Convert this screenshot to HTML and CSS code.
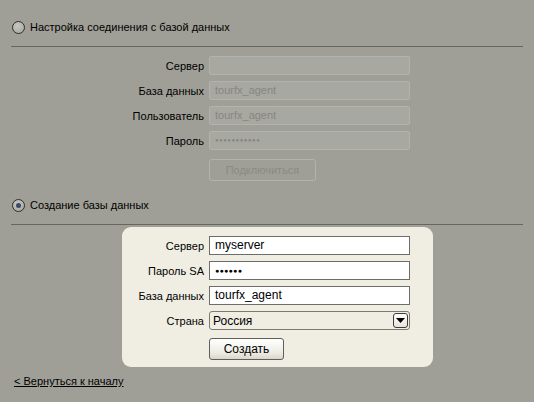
FILE: index.html
```html
<!DOCTYPE html>
<html lang="ru">
<head>
<meta charset="utf-8">
<link rel="stylesheet" href="styles.css">
</head>
<body>
<div class="page">
  <div class="radio-row first">
    <span class="radio"></span>
    <span class="radio-label">Настройка соединения с базой данных</span>
  </div>
  <div class="rule"></div>
  <div class="form disabled">
    <label class="lbl">Сервер</label>
    <div class="field"></div>
    <label class="lbl">База данных</label>
    <div class="field">tourfx_agent</div>
    <label class="lbl">Пользователь</label>
    <div class="field">tourfx_agent</div>
    <label class="lbl">Пароль</label>
    <div class="field dots">●●●●●●●●●●●</div>
    <span></span>
    <div class="btn btn-off">Подключиться</div>
  </div>

  <div class="radio-row second">
    <span class="radio checked"></span>
    <span class="radio-label">Создание базы данных</span>
  </div>
  <div class="rule"></div>

  <div class="panel">
    <div class="form active">
      <label class="lbl">Сервер</label>
      <div class="field">myserver</div>
      <label class="lbl">Пароль SA</label>
      <div class="field pw">●●●●●●</div>
      <label class="lbl">База данных</label>
      <div class="field">tourfx_agent</div>
      <label class="lbl">Страна</label>
      <div class="select">
        <span>Россия</span>
        <span class="drop"><svg width="9" height="5" viewBox="0 0 9 5"><path d="M0 0h9L4.5 5z" fill="#000"/></svg></span>
      </div>
      <span></span>
      <div class="btn btn-on">Создать</div>
    </div>
  </div>

  <a class="back" href="#">&lt; Вернуться к началу</a>
</div>
</body>
</html>
```

FILE: styles.css
```css
html, body {
  margin: 0;
  background: #9f9f97;
  font-family: "Liberation Sans", Arial, sans-serif;
  font-size: 11px;
  color: #000;
}
.page {
  padding: 0 11px;
  height: 402px;
  box-sizing: border-box;
  overflow: hidden;
}
.radio-row {
  display: flex;
  align-items: center;
  height: 14px;
  padding-left: 1px;
}
.radio-row.first { margin-top: 20px; }
.radio-row.second { margin-top: 17px; }
.radio {
  width: 11px;
  height: 11px;
  border: 1px solid #2e2e2b;
  border-radius: 50%;
  background: radial-gradient(circle at 40% 35%, #c8c8c2, #a4a49e);
  position: relative;
  flex: none;
}
.radio.checked::after {
  content: "";
  position: absolute;
  left: 3px;
  top: 3px;
  width: 5px;
  height: 5px;
  border-radius: 50%;
  background: #3c4a68;
}
.radio-label { margin-left: 5px; }
.rule {
  margin-top: 12px;
  height: 1px;
  background: #67675f;
}
.form {
  display: grid;
  grid-template-columns: 193px 201px;
  grid-template-rows: repeat(4, 19px) auto;
  column-gap: 5px;
  row-gap: 6px;
  align-items: center;
}
.form.disabled { margin-top: 9px; }
.lbl { text-align: right; }
.field {
  height: 19px;
  box-sizing: border-box;
  line-height: 17px;
  padding: 0 5px;
  white-space: nowrap;
}
.disabled .field {
  background: #a8a8a2;
  border: 1px solid #b3b3ac;
  border-radius: 2px;
  color: #86867f;
}
.disabled .dots { font-size: 6px; letter-spacing: 0.5px; line-height: 17px; }
.btn {
  box-sizing: border-box;
  height: 22px;
  line-height: 20px;
  text-align: center;
  border-radius: 3px;
  margin-top: 3px;
  align-self: start;
}
.btn-off {
  width: 107px;
  border: 1px solid #b3b3ac;
  color: #8a8a84;
}
.panel {
  margin-top: 2px;
  margin-left: 111px;
  width: 311px;
  background: #f0eee3;
  border-radius: 9px;
  padding: 9px 0 7px;
}
.panel .form { grid-template-columns: 82px 201px; }
.active .field {
  background: #fff;
  border: 1px solid #6e6e68;
  color: #000;
  font-size: 12px;
}
.active .pw { font-size: 7px; letter-spacing: 0.3px; }
.select {
  height: 19px;
  box-sizing: border-box;
  border: 1px solid #7a7a72;
  border-radius: 3px;
  display: flex;
  align-items: center;
  justify-content: space-between;
  padding-left: 3px;
  font-size: 12px;
  background: #f0eee3;
}
.drop {
  width: 15px;
  height: 15px;
  box-sizing: border-box;
  border: 1px solid #3c3c38;
  border-radius: 3px;
  margin-right: 1px;
  display: flex;
  align-items: center;
  justify-content: center;
  background: linear-gradient(#ffffff, #e6e4d8);
}
.btn-on {
  width: 75px;
  border: 1px solid #5f5f58;
  background: linear-gradient(#ffffff, #ecebe2 70%, #d9d7cc);
  font-size: 12px;
  margin-top: 2px;
}
.back {
  display: inline-block;
  margin-top: 8px;
  margin-left: 3px;
  color: #000;
  font-size: 11px;
}
```
